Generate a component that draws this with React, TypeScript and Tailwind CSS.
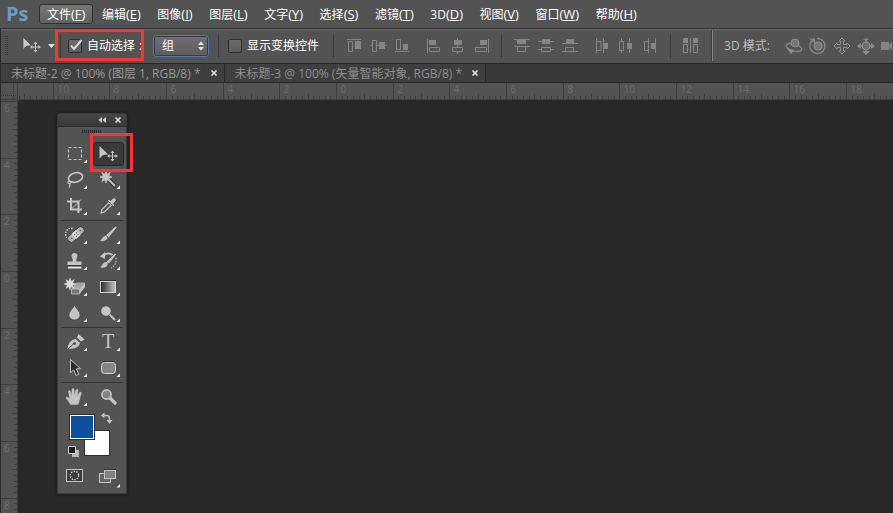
import React, { useLayoutEffect, useRef, useState } from "react";

const UI_FONT = "font-['Open_Sans','Noto_Sans_CJK_SC',sans-serif]";

/* ---------- Menu bar ---------- */

const MENUS: [string, string][] = [
  ["文件", "F"],
  ["编辑", "E"],
  ["图像", "I"],
  ["图层", "L"],
  ["文字", "Y"],
  ["选择", "S"],
  ["滤镜", "T"],
  ["3D", "D"],
  ["视图", "V"],
  ["窗口", "W"],
  ["帮助", "H"],
];

function MenuBar() {
  return (
    <nav className="flex h-7 shrink-0 items-center bg-[#535353] text-white" aria-label="主菜单">
      <span className="w-[39px] shrink-0 pl-[6px] text-[20px] leading-6 font-bold text-[#6d9bc8]">Ps</span>
      <div className="flex min-w-[606px] items-center justify-between">
        {MENUS.map(([name, key], i) => (
          <button
            key={key}
            type="button"
            className={
              "h-5 shrink-0 rounded-[3px] border px-[7px] text-[12px] leading-[18px] whitespace-nowrap " +
              (i === 0 ? "border-[#2f2f2f] bg-linear-to-b from-[#757575] to-[#626262]" : "border-transparent")
            }
          >
            {name}
            <span className="text-[13px]">
              (<span className="underline">{key}</span>)
            </span>
          </button>
        ))}
      </div>
    </nav>
  );
}

/* ---------- Options bar ---------- */

function Divider() {
  return <span className="h-6 w-px shrink-0 bg-[#393939]" />;
}

type BarIconProps = { label: string; solid?: string; line?: string; children?: React.ReactNode };

function BarIcon({ label, solid, line, children }: BarIconProps) {
  return (
    <button type="button" aria-label={label} className="h-5 w-6 shrink-0">
      <svg viewBox="0 0 24 20" className="h-5 w-6" fill="none">
        {line && <path d={line} stroke="#858585" />}
        {solid && <path d={solid} fill="#858585" />}
        {children}
      </svg>
    </button>
  );
}

function CheckField({ id, label, colon, defaultChecked }: { id: string; label: string; colon?: boolean; defaultChecked?: boolean }) {
  const [on, setOn] = useState(!!defaultChecked);
  return (
    <div className="flex shrink-0 items-center gap-[5px]">
      <span className="grid h-[14px] w-[14px]">
        <input
          id={id}
          type="checkbox"
          checked={on}
          onChange={(e) => setOn(e.target.checked)}
          className="col-start-1 row-start-1 h-[14px] w-[14px] appearance-none rounded-[2px] border border-[#2c2c2c] bg-linear-to-b from-[#6c6c6c] to-[#5c5c5c]"
        />
        {on && (
          <svg viewBox="0 0 14 14" className="pointer-events-none col-start-1 row-start-1 h-[14px] w-[14px] overflow-visible" fill="none">
            <path d="M3 6.500 6 10 13.500 1" stroke="#dcdcdc" strokeWidth="2" />
          </svg>
        )}
      </span>
      <label htmlFor={id} className="text-[12px] leading-5 whitespace-nowrap text-white">
        {label}
        {colon && <span className="inline-block w-3 pl-1">:</span>}
      </label>
    </div>
  );
}

function OptionsBar() {
  return (
    <div className="flex h-[34px] shrink-0 items-center border-t border-[#6a6a6a] bg-[#535353] pb-[2px]">
      <svg viewBox="0 0 59 24" className="h-6 w-[59px] shrink-0" fill="none">
        <path d="M4.500 2v20M6.500 2v20" stroke="#333" strokeDasharray="1 1" />
        <path d="M22 3v12.500l3-3 5.500-1z" fill="#c4c4c4" stroke="#3c3c3c" strokeWidth=".6" />
        <MoveCross cx={34.5} cy={13} />
        <path d="M47 10h7l-3.500 4z" fill="#e8e8e8" />
      </svg>
      <Divider />
      <div className="relative ml-[7px] shrink-0">
        <CheckField id="auto-select" label="自动选择" colon defaultChecked />
        <span className="pointer-events-none absolute -top-[7px] -left-[13px] h-[32px] w-[89px] border-[3px] border-[#fb3535]" />
      </div>
      <div className="relative ml-[6px] shrink-0">
        <select
          aria-label="自动选择类型"
          className="block h-[22px] w-14 appearance-none rounded-[3px] border border-[#5273b5] bg-linear-to-b from-[#707070] to-[#5c5c5c] pl-2 text-[12px] leading-5 text-white shadow-[inset_0_0_0_1px_#333b4c]"
        >
          <option>组</option>
          <option>图层</option>
        </select>
        <svg viewBox="0 0 6 10" className="pointer-events-none absolute top-[6px] right-[5px] h-[10px] w-[6px]">
          <path d="M0 4 3 .5l3 3.500zM0 6l3 3.500 3-3.500z" fill="#e4e4e4" />
        </svg>
      </div>
      <span className="ml-[9px] flex"><Divider /></span>
      <div className="mr-[14px] ml-[9px]">
        <CheckField id="transform-controls" label="显示变换控件" />
      </div>
      <Divider />
      <div className="ml-2 flex">
        <BarIcon label="顶对齐" line="M5 3.500h14M6.500 5.500h4v10h-4z" solid="M13 5h6v8h-6z" />
        <BarIcon label="垂直居中对齐" line="M4 9.500h2M11 9.500h9M6.500 4.500h4v11h-4z" solid="M13 6h6v7h-6z" />
        <BarIcon label="底对齐" line="M5 15.500h14M6.500 3.500h4v10h-4z" solid="M13 8h5v6h-5z" />
      </div>
      <div className="mr-[7px] ml-2 flex">
        <BarIcon label="左对齐" line="M5.500 3v14M7.500 11.500h10v4h-10z" solid="M7 4h7v5H7z" />
        <BarIcon label="水平居中对齐" line="M11.500 2v3M11.500 9v2M11.500 16v2M6.500 11.500h10v4h-10z" solid="M8 4h8v5H8z" />
        <BarIcon label="右对齐" line="M18.500 3v14M5.500 11.500h11v4h-11z" solid="M10 4h7v5h-7z" />
      </div>
      <Divider />
      <div className="ml-2 flex">
        <BarIcon label="按顶分布" line="M4 3.500h16M4 10.500h16M7.500 11v4.500h8V11" solid="M7 4h9v4H7z" />
        <BarIcon label="垂直居中分布" line="M4 5.500h16M4 13.500h3M17 13.500h3M7.500 11.500h9v4h-9z" solid="M8 3h8v5H8z" />
        <BarIcon label="按底分布" line="M4 7.500h16M4 15.500h16M7.500 15V11.500h8V15" solid="M8 3h8v4H8z" />
      </div>
      <div className="mr-2 ml-2 flex">
        <BarIcon label="按左分布" line="M6.500 2v15M7 5.500h4v9H7M13.500 2v15" solid="M14 7h4v6h-4z" />
        <BarIcon label="水平居中分布" line="M7.500 2v4M7.500 14v3M5.500 5.500h4v9h-4zM15.500 2v15" solid="M13 7h5v6h-5z" />
        <BarIcon label="按右分布" line="M10.500 2v15M10 5.500H6.500v9H10M17.500 2v15" solid="M13 7h4v6h-4z" />
      </div>
      <Divider />
      <div className="mr-[9px] ml-2 flex">
        <BarIcon label="自动对齐图层" line="M4.500 8.500h4v8h-4zM11.500 2v15M14.500 8.500h4v8h-4z" solid="M4 2h5v5H4zM14 2h5v5h-5z" />
      </div>
      <div className="flex h-full min-w-0 flex-1 items-center overflow-hidden border-l border-[#858585] shadow-[-1px_0_0_#393939]">
        <span className="w-[69px] shrink-0 pl-[11px] text-[12px] leading-5 whitespace-nowrap text-[#bcbcbc]">3D 模式:</span>
        <BarIcon label="旋转 3D 对象">
          <ellipse cx="12" cy="11.500" rx="8" ry="3.500" transform="rotate(16 12 11.500)" stroke="#858585" strokeWidth="1.500" />
          <circle cx="13" cy="7" r="4" fill="#777" stroke="#929292" />
          <path d="M5 12.500l7 1.500-3 4z" fill="#929292" />
        </BarIcon>
        <BarIcon label="滚动 3D 对象">
          <path d="M6 4.800a7.500 7.500 0 1 0 5-2.300" stroke="#858585" strokeWidth="1.400" />
          <path d="M3 2.500h6v5z" fill="#858585" />
          <circle cx="12" cy="10" r="4" fill="#757575" stroke="#929292" strokeWidth="1.200" />
        </BarIcon>
        <BarIcon label="拖动 3D 对象">
          <path
            d="M12 2 15 5H13.500V8.500H17V7l3 3-3 3v-1.500h-3.500V15H15l-3 3-3-3h1.500v-3.500H7V13l-3-3 3-3v1.500h3.500V5H9z"
            stroke="#929292"
          />
        </BarIcon>
        <BarIcon label="滑动 3D 对象">
          <path d="M12 2l3 2H9zM12 19l4-4H8zM3 10l4-3v6zM21 10l-4-3v6z" fill="#929292" />
          <path d="M5 10h14M12 3v14" stroke="#858585" strokeWidth="2" />
          <circle cx="12" cy="10" r="4" fill="#6c6c6c" stroke="#929292" />
        </BarIcon>
        <BarIcon label="缩放 3D 对象">
          <path d="M3 6h8v8H3zM11 9l3-3v8l-3-3z" fill="#858585" />
        </BarIcon>
      </div>
    </div>
  );
}

/* ---------- Document tabs ---------- */

function TabBar() {
  const tabs = ["未标题-2 @ 100% (图层 1, RGB/8) *", "未标题-3 @ 100% (矢量智能对象, RGB/8) *"];
  return (
    <div className="flex h-5 shrink-0 border-y border-[#272727] bg-[#383838]">
      {tabs.map((t, i) => (
        <div key={t} className="flex shrink-0 items-center gap-[9px] border-r border-[#252525] bg-[#3f3f3f] pr-[6px] pl-[10px]">
          <button type="button" className={"pt-px text-[12px] leading-[18px] whitespace-nowrap " + (i === 0 ? "text-[#989898]" : "text-[#8e8e8e]")}>
            {t}
          </button>
          <button type="button" aria-label={"关闭 " + t} className="h-2 w-2">
            <svg viewBox="0 0 8 8" className="h-2 w-2" fill="none">
              <path d="M1.500 1.500l5 5M6.500 1.500l-5 5" stroke="#dedede" strokeWidth="1.700" />
            </svg>
          </button>
        </div>
      ))}
    </div>
  );
}

/* ---------- Rulers ---------- */

// One tick is a fifth of a centimetre at 100% zoom; a labelled line comes every ten ticks.
const TICK = 170 / 30;

function Ruler({ vertical, zero }: { vertical?: boolean; zero: number }) {
  const box = useRef<SVGSVGElement>(null);
  const [length, setLength] = useState(0);

  useLayoutEffect(() => {
    const measure = () => {
      const r = box.current!.getBoundingClientRect();
      setLength(vertical ? r.height : r.width);
    };
    measure();
    window.addEventListener("resize", measure);
    return () => window.removeEventListener("resize", measure);
  }, [vertical]);

  let d = "";
  const labels: { at: number; text: string }[] = [];
  for (let k = Math.ceil(-zero / TICK); zero + k * TICK < length; k++) {
    const p = Math.round(zero + k * TICK) + 0.5;
    const len = k % 10 === 0 ? 17 : k % 5 === 0 ? 6 : 4;
    d += vertical ? `M17 ${p}h${-len}` : `M${p} 17v${-len}`;
    if (k % 10 === 0 && p + 14 < length) labels.push({ at: p, text: String(Math.abs(k / 5)) });
  }
  return (
    <svg
      ref={box}
      className={"block overflow-hidden bg-[#535353] " + (vertical ? "h-full w-[17px]" : "h-[17px] w-full")}
      aria-hidden="true"
    >
      <path d={d} stroke="#3d3d3d" fill="none" />
      {labels.map((l) => (
        <text
          key={l.at}
          x={vertical ? 3 : l.at + 4}
          y={vertical ? l.at + 10 : 10}
          className="fill-[#6e6e6e] font-['Open_Sans',sans-serif] text-[10px]"
        >
          {l.text}
        </text>
      ))}
    </svg>
  );
}

/* ---------- Tool panel ---------- */

const G = "#c4c4c4";
const D = "#303030";

function MoveCross({ cx, cy }: { cx: number; cy: number }) {
  return (
    <g transform={`translate(${cx} ${cy})`}>
      <path d="M0-4V4M-4 0H4" stroke={G} />
      <path d="M0-5.500 2-3H-2zM0 5.500 2 3H-2zM-5.500 0-3-2V2zM5.500 0 3-2V2z" fill={G} />
    </g>
  );
}

function Tool({ label, corner = true, active, children }: { label: string; corner?: boolean; active?: boolean; children: React.ReactNode }) {
  return (
    <button type="button" aria-label={label} aria-pressed={!!active} className="h-[26px] w-[33px]">
      <svg viewBox="0 0 33 26" className="h-[26px] w-[33px] overflow-visible" fill="none">
        {active && <rect x="1.500" y="1.500" width="30" height="23" rx="2.500" fill="#393939" stroke="#272727" />}
        {children}
        {corner && <path d="M28 18.500V22h-3.500z" fill="#f0f0f0" />}
      </svg>
    </button>
  );
}

const BURST = "M0-6 1.200-2.700 4.200-4.500 2.700-1.300 6 0 2.700 1.300 4.200 4.500 1.200 2.700 0 6-1.200 2.700-4.200 4.500-2.700 1.300-6 0-2.700-1.300-4.200-4.500-1.200-2.700z";

function Group({ children }: { children: React.ReactNode }) {
  return <div className="grid grid-cols-2">{children}</div>;
}

function GroupLine() {
  return <div className="mx-[2px] my-px h-px bg-[#343434]" />;
}

function ToolPanel() {
  return (
    <aside
      aria-label="工具"
      className="absolute top-[13px] left-[39px] w-[70px] rounded-t-[3px] border border-[#3b3b3b] bg-[#535353] shadow-[0_0_3px_1px_#1c1c1c]"
    >
      <header className="flex h-[13px] items-center justify-end gap-2 border-b border-[#2b2b2b] bg-linear-to-b from-[#464646] to-[#383838] pr-1">
        <button type="button" aria-label="折叠" className="h-2 w-2">
          <svg viewBox="0 0 8 8" className="h-2 w-2"><path d="M4 1v6L.5 4zM8 1v6L4.500 4z" fill="#d0d0d0" /></svg>
        </button>
        <button type="button" aria-label="关闭" className="h-2 w-2">
          <svg viewBox="0 0 8 8" className="h-2 w-2" fill="none"><path d="M1.500 1.500l5 5M6.500 1.500l-5 5" stroke="#d8d8d8" strokeWidth="1.700" /></svg>
        </button>
      </header>
      <div className="flex h-[14px] justify-center pt-[3px]">
        <svg viewBox="0 0 20 3" className="h-[3px] w-5"><path d="M0 1.500h20" stroke="#2b2b2b" strokeWidth="3" strokeDasharray="1 1" /></svg>
      </div>
      <div className="flex flex-col px-px">
        <Group>
          <Tool label="矩形选框工具">
            <rect x="9.500" y="6.500" width="13" height="12" stroke={G} strokeWidth="1.200" strokeDasharray="3 2" />
          </Tool>
          <div className="relative flex">
            <Tool label="移动工具" active corner={false}>
              <path d="M7.500 5v12.500l3.300-3.300 5.200-1z" fill={G} />
              <MoveCross cx={20.5} cy={15} />
            </Tool>
            <span className="pointer-events-none absolute -top-2 -left-[2px] h-[39px] w-[43px] border-[3px] border-[#fb3535]" />
          </div>
          <Tool label="套索工具">
            <ellipse cx="16.500" cy="10.500" rx="7.200" ry="4.600" transform="rotate(-14 16.500 10.500)" stroke={G} strokeWidth="1.700" />
            <path d="M10 14c-2 1-1 3 .5 2.500s1.500-2-.5-2.500M10.500 17c1 1 .5 2-.5 3.500" stroke={G} strokeWidth="1.200" />
          </Tool>
          <Tool label="魔棒工具">
            <path d="M15 11l8.500 8.500" stroke={D} strokeWidth="4" />
            <path d="M15 11l8 8" stroke={G} strokeWidth="2.200" />
            <path d={BURST} transform="translate(14 10)" fill={G} stroke={G} strokeWidth=".8" />
          </Tool>
          <Tool label="裁剪工具">
            <path d="M12 5v11.500h11M8 8.500h11.500V20" stroke={G} strokeWidth="2" />
            <path d="M13 15.500l9-9" stroke={G} strokeWidth="1" />
          </Tool>
          <Tool label="吸管工具">
            <path d="M9 20l1-3.500 7-7 2.500 2.500-7 7z" fill="#555" stroke={G} strokeWidth="1.200" />
            <path d="M15.500 7.500l6 6 1.300-1.300-1.500-1.500 2.500-2.800c1.200-1.500-1.200-4-2.700-2.700l-2.800 2.500-1.500-1.500z" fill={G} stroke={D} strokeWidth=".5" />
          </Tool>
        </Group>
        <GroupLine />
        <Group>
          <Tool label="污点修复画笔工具">
            <path d="M13.500 6.500c-9-2-8.500 12-2 11" stroke="#eee" strokeWidth="1.300" strokeDasharray="1.300 1.300" />
            <g transform="rotate(-42 17 12.500)">
              <rect x="7.500" y="9" width="19" height="7" rx="2.500" fill="#b4b4b4" stroke={D} strokeWidth=".8" />
              <path d="M14 9h6v7h-6z" fill="#dedede" />
              <path d="M15.500 11.500h1.200M18 11.500h1.200M15.500 14h1.200M18 14h1.200M10.500 12.500h1.500M22 12.500h1.500" stroke="#444" strokeWidth="1" />
            </g>
          </Tool>
          <Tool label="画笔工具">
            <path d="M25 5.500L16.500 16l-3-2.500L23.500 4z" fill={G} stroke={D} strokeWidth=".5" />
            <path d="M7 18.500c3 0 3-5 6.200-5 2.500 0 3.300 2.500 1.800 4C12.700 20 9 20.200 7 18.500z" fill={G} stroke={D} strokeWidth=".5" />
          </Tool>
          <Tool label="仿制图章工具">
            <path d="M15.500 5a3 3 0 0 1 3 3c0 1.500-1.200 2.500-1.200 4v1.500h5.200V17h-14v-3.500h5.200V12c0-1.500-1.200-2.500-1.200-4a3 3 0 0 1 3-3z" fill={G} />
            <path d="M9 19.500h13.500" stroke="#e8e8e8" strokeWidth="2" />
            <path d="M8.500 17.700h14" stroke={D} />
          </Tool>
          <Tool label="历史记录画笔工具">
            <path d="M11 7.500c3-2 7-2.500 9.500-.5" stroke={G} strokeWidth="2" />
            <path d="M8 8.500l5-4.500v7z" fill={G} />
            <path d="M24.500 6.500L17 16l-2.800-2.200L23 5z" fill={G} stroke={D} strokeWidth=".5" />
            <path d="M8 19c2.500-.5 2.500-5 5.700-5 2.300 0 2.500 2.200 1.300 3.700-2 2.300-5 2.700-7 1.300z" fill={G} />
            <path d="M24 10c.5 4-1 8-5 10" stroke={G} strokeWidth="1.300" strokeDasharray="1.300 1.500" />
          </Tool>
          <Tool label="背景橡皮擦工具">
            <path d="M12.500 15l5-6.500H26L20.500 15z" fill="#a6a6a6" />
            <path d="M12.500 15h8v5h-8z" fill="#777" stroke={G} strokeWidth=".8" />
            <path d="M20.500 15L26 8.500V13l-5.500 7z" fill={G} />
            <path d={BURST} transform="translate(11 10)" fill="#ddd" stroke="#ddd" strokeWidth=".4" />
          </Tool>
          <Tool label="渐变工具">
            <defs>
              <linearGradient id="ramp"><stop stopColor="#262626" /><stop offset="1" stopColor="#c8c8c8" /></linearGradient>
            </defs>
            <rect x="8.500" y="7.500" width="15" height="11" fill="url(#ramp)" stroke="#d0d0d0" />
            <path d="M8 6.500h16" stroke={D} />
          </Tool>
          <Tool label="模糊工具">
            <path d="M15.500 5c1.500 4 5.500 6 5.500 10a5.500 5 0 0 1-11 0c0-4 4-6 5.500-10z" fill={G} stroke={D} strokeWidth=".5" />
          </Tool>
          <Tool label="减淡工具">
            <path d="M17 14l6 6" stroke={G} strokeWidth="2" />
            <circle cx="14" cy="11" r="5.200" fill={G} stroke={D} strokeWidth=".6" />
          </Tool>
        </Group>
        <GroupLine />
        <Group>
          <Tool label="钢笔工具">
            <path d="M8 20.500c1-6 2-9 8.500-11l5 4.500c-1.500 4.500-6 6.500-13.500 6.500z" fill={G} stroke={D} strokeWidth=".5" />
            <path d="M9 20l6-5.500" stroke="#444" />
            <circle cx="15.500" cy="14.500" r="1.300" fill="#333" />
            <path d="M17.500 8.500l2-4 6.500 6-4 2.500z" fill={G} stroke={D} strokeWidth=".5" />
          </Tool>
          <Tool label="横排文字工具">
            <text x="16" y="19" textAnchor="middle" fill={G} className="font-['Liberation_Serif',serif] text-[20px]">T</text>
          </Tool>
          <Tool label="路径选择工具">
            <path d="M11.500 4.500v13.300l3.200-3 2.300 5.700 2.800-1.200-2.500-5.500h4.400z" fill="#2a2a2a" stroke={G} />
          </Tool>
          <Tool label="圆角矩形工具">
            <rect x="9.500" y="7.500" width="14" height="11" rx="3" fill="#858585" stroke="#d0d0d0" />
            <path d="M11 6.500h10" stroke={D} />
          </Tool>
        </Group>
        <GroupLine />
        <Group>
          <Tool label="抓手工具">
            <path
              d="M11.500 20.500c-1-2.500-3.500-4.500-4.500-7 .8-1.200 2.500 0 3.700 1.500L9.500 7.500c0-1.200 1.600-1.400 2-.2l1.200 4.700.3-6.500c.1-1.300 2-1.300 2.100 0l.4 6 1.500-5.500c.5-1.200 2.200-.8 2 .4l-.8 6 2.300-3.900c.7-1 2.200-.2 1.800.9-1.300 3.100-1.800 8.100-3.300 11.100z"
              fill={G}
              stroke={G}
              strokeWidth=".4"
            />
          </Tool>
          <Tool label="缩放工具" corner={false}>
            <path d="M18 14l5 5" stroke={G} strokeWidth="3.200" strokeLinecap="round" />
            <circle cx="14.500" cy="10.500" r="4.600" fill="#858585" stroke={G} strokeWidth="1.600" />
          </Tool>
        </Group>
        <div className="relative h-[53px]">
          <button type="button" aria-label="背景色" className="absolute top-[20px] left-[25px] h-[26px] w-[26px] border border-[#2e2e2e] bg-white" />
          <button type="button" aria-label="前景色" className="absolute top-1 left-[10px] h-[26px] w-[26px] border border-[#2e2e2e] bg-white p-px">
            <span className="block h-full w-full bg-[#0d4f9f]" />
          </button>
          <button type="button" aria-label="切换前景色和背景色" className="absolute top-[2px] left-[42px] h-3 w-3">
            <svg viewBox="0 0 12 12" className="h-3 w-3" fill="none">
              <path d="M3 3.500h2.500a3 3 0 0 1 3 3V9" stroke={G} strokeWidth="1.400" />
              <path d="M0 3.500L3.500.5v6zM8.500 12l-3-4h6z" fill={G} />
            </svg>
          </button>
          <button type="button" aria-label="默认颜色" className="absolute top-[36px] left-[9px] h-[11px] w-[11px]">
            <svg viewBox="0 0 11 11" className="h-[11px] w-[11px]">
              <path d="M4 4h7v7H4z" fill="#b9b9b9" />
              <path d="M.5.500h7v7h-7z" fill="#1d1d1d" stroke="#d0d0d0" />
            </svg>
          </button>
        </div>
        <div className="mb-1 grid grid-cols-2">
          <Tool label="以快速蒙版模式编辑" corner={false}>
            <rect x="7.500" y="6.500" width="16" height="12" fill="#3c3c3c" stroke={G} />
            <circle cx="15.500" cy="12.500" r="4.200" stroke="#eee" strokeWidth="1.300" strokeDasharray="1.300 1.340" />
          </Tool>
          <Tool label="更改屏幕模式" corner={false}>
            <rect x="7.500" y="10.500" width="11" height="9" fill="#666" stroke={G} />
            <rect x="12.500" y="7.500" width="11" height="8" fill="#808080" stroke={G} />
            <path d="M12 6.500h12" stroke={D} />
            <path d="M28 21v3.500h-3.500z" fill="#e8e8e8" />
          </Tool>
        </div>
      </div>
    </aside>
  );
}

/* ---------- Window ---------- */

export default function App() {
  return (
    <div className={"flex h-screen flex-col overflow-hidden bg-[#282828] " + UI_FONT}>
      <MenuBar />
      <div className="h-px shrink-0 bg-[#303030]" />
      <div className="flex min-h-0 flex-1 flex-col border-l border-[#2a2a2a]">
        <OptionsBar />
        <TabBar />
        <div className="grid min-h-0 flex-1 grid-cols-[17px_minmax(0,1fr)] grid-rows-[17px_minmax(0,1fr)]">
          <svg viewBox="0 0 17 17" className="h-[17px] w-[17px] bg-[#535353]" fill="none" aria-hidden="true">
            <path d="M12.500 0v17M0 12.500h17" stroke="#333" strokeDasharray="1 1" />
            <path d="M16.500 0v17M0 16.500h17" stroke="#3d3d3d" />
          </svg>
          <div className="overflow-hidden border-b border-[#3d3d3d]">
            <Ruler zero={318} />
          </div>
          <div className="overflow-hidden border-r border-[#3d3d3d]">
            <Ruler vertical zero={171} />
          </div>
          <main className="relative min-w-0 bg-[#282828]">
            <ToolPanel />
          </main>
        </div>
      </div>
    </div>
  );
}
